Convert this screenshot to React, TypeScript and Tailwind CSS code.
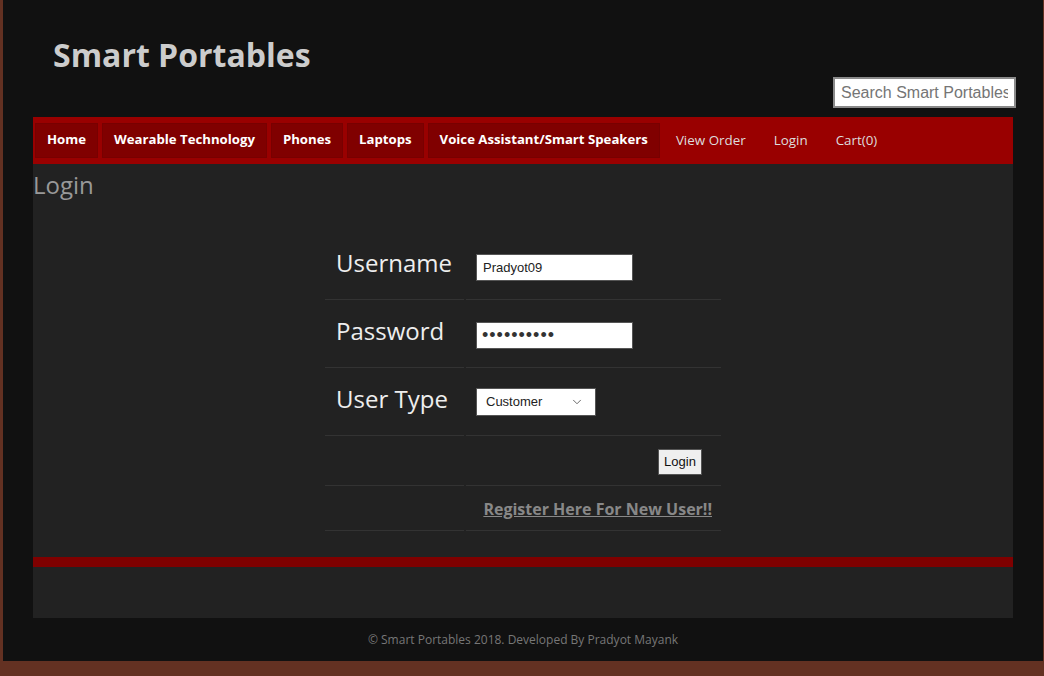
import { ChevronDown } from "lucide-react";

const boxed = ["Home", "Wearable Technology", "Phones", "Laptops", "Voice Assistant/Smart Speakers"];
const plain = ["View Order", "Login", "Cart(0)"];

const sans = "font-['Open_Sans',sans-serif]";
const ctrl = "font-['Liberation_Sans',Arial,sans-serif]";

export default function App() {
  return (
    <div className="min-h-[676px] bg-[#633122] pl-[3px]">
      <div className={`w-[1040px] bg-[#111111] ${sans}`}>
        {/* header */}
        <header className="flex h-[117px] justify-between">
          <h1 className="self-start pl-[50px] pt-[31px] text-[32px] font-bold leading-[48px] text-[#cccccc]">
            Smart Portables
          </h1>
          <input
            type="text"
            placeholder="Search Smart Portables"
            className={`mb-[9px] mr-[27px] h-[31px] w-[183px] self-end border-2 border-[#8a8a8a] bg-white px-[6px] text-[16px] text-[#333] placeholder:text-[#757575] ${ctrl}`}
          />
        </header>

        <div className="mx-[30px]">
          {/* nav */}
          <nav className="flex h-[47px] items-center gap-[4px] bg-[#990000] pl-[2px]">
            {boxed.map((item) => (
              <a
                key={item}
                className="flex h-[35px] items-center border border-[#780000] bg-[#800000] px-[11px] pb-[1px] text-[13.2px] font-bold text-white"
              >
                {item}
              </a>
            ))}
            {plain.map((item) => (
              <a key={item} className="flex h-[35px] items-center px-[12px] pb-[1px] text-[13.4px] text-[#dddddd]">
                {item}
              </a>
            ))}
          </nav>

          {/* login panel */}
          <section className="bg-[#222222] pt-[3px]">
            <h2 className="text-[24px] leading-[36px] text-[#999999]">Login</h2>

            <table className="mx-auto mt-[29px] w-[400px] border-separate border-spacing-[2px]">
              <tbody>
                <tr>
                  <td className="h-[66px] w-[139px] border-b border-[#333333] pl-[11px] pt-[11px] align-top text-[24px] leading-[36px] text-[#eeeeee]">
                    Username
                  </td>
                  <td className="h-[66px] border-b border-[#333333] pl-[10px] pt-[20px] align-top">
                    <input
                      type="text"
                      defaultValue="Pradyot09"
                      className={`h-[27px] w-[157px] border border-[#555] bg-white px-[6px] text-[13px] text-[#222] ${ctrl}`}
                    />
                  </td>
                </tr>
                <tr>
                  <td className="h-[66px] border-b border-[#333333] pl-[11px] pt-[11px] align-top text-[24px] leading-[36px] text-[#eeeeee]">
                    Password
                  </td>
                  <td className="h-[66px] border-b border-[#333333] pl-[10px] pt-[20px] align-top">
                    <input
                      type="password"
                      defaultValue="pradyot123"
                      className={`h-[27px] w-[157px] border border-[#555] bg-white px-[5px] text-[18px] tracking-[1px] text-[#333] ${ctrl}`}
                    />
                  </td>
                </tr>
                <tr>
                  <td className="h-[66px] border-b border-[#333333] pl-[11px] pt-[11px] align-top text-[24px] leading-[36px] text-[#eeeeee]">
                    User Type
                  </td>
                  <td className="h-[66px] border-b border-[#333333] pl-[10px] pt-[18px] align-top">
                    <div className="relative w-[120px]">
                      <select
                        defaultValue="Customer"
                        className={`h-[28px] w-[120px] appearance-none border border-[#555] bg-white pl-[9px] text-[13px] text-[#222] ${ctrl}`}
                      >
                        <option>Customer</option>
                        <option>Store Manager</option>
                        <option>Salesman</option>
                      </select>
                      <ChevronDown
                        size={14}
                        strokeWidth={1.5}
                        className="pointer-events-none absolute right-[12px] top-[7px] text-[#555]"
                      />
                    </div>
                  </td>
                </tr>
                <tr>
                  <td className="h-[48px] border-b border-[#333333]"></td>
                  <td className="h-[48px] border-b border-[#333333] pr-[19px] pt-[10px] text-right align-top">
                    <button
                      className={`h-[26px] w-[44px] border border-[#555] bg-[#efefef] text-[13px] text-[#111] ${ctrl}`}
                    >
                      Login
                    </button>
                  </td>
                </tr>
                <tr>
                  <td className="h-[43px] border-b border-[#333333]"></td>
                  <td className="h-[43px] border-b border-[#333333] pr-[9px] pt-[9px] text-right align-top">
                    <a className="text-[16px] font-bold leading-[24px] text-[#888888] underline">
                      Register Here For New User!!
                    </a>
                  </td>
                </tr>
              </tbody>
            </table>

            <div className="mt-[24px] h-[10px] bg-[#7f0000]" />
            <div className="h-[51px]" />
          </section>
        </div>

        {/* footer */}
        <footer className="flex h-[43px] items-center justify-center text-[12px] text-[#777777]">
          © Smart Portables 2018. Developed By Pradyot Mayank
        </footer>
      </div>
    </div>
  );
}
